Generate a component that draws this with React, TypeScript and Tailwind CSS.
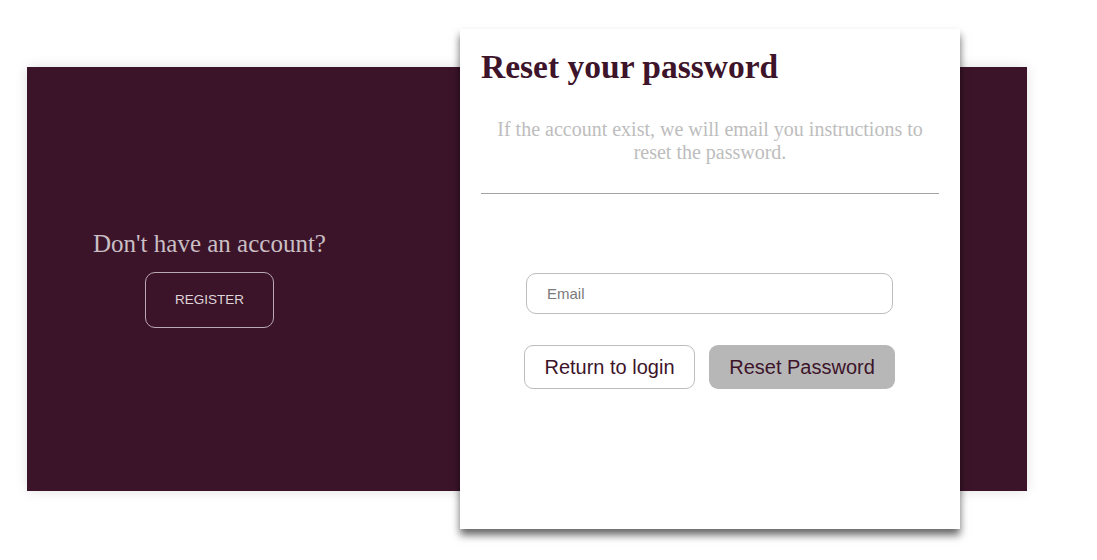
import React from "react";

const serif = "font-['Liberation_Serif','Times_New_Roman',serif]";
const sans = "font-['Liberation_Sans',Arial,sans-serif]";

const RegisterPanel = () => (
  <div className="flex h-full w-[365px] flex-col items-center justify-center">
    <h2 className={`${serif} text-[25px] leading-[27px] text-[#c9bfc4]`}>Don't have an account?</h2>
    <button className={`${sans} mt-[15px] h-[56px] w-[129px] rounded-[10px] border border-[#b9a9b2] text-[13.5px] uppercase text-[#ddd3d8]`}>
      Register
    </button>
  </div>
);

const ResetCard = () => (
  <div className="absolute left-[460px] top-[29px] flex h-[500px] w-[500px] flex-col bg-white px-[21px] pt-[19px] shadow-[0_6px_8px_rgba(0,0,0,0.6)]">
    <h1 className={`${serif} text-[33.5px] font-bold leading-[38px] text-[#3d1429]`}>Reset your password</h1>
    <p className={`${serif} mt-[32px] px-3 text-center text-[20px] leading-[23px] text-[#bdbdbd]`}>
      If the account exist, we will email you instructions to reset the password.
    </p>
    <hr className="mt-[29px] border-t border-[#a3a3a3]" />
    <div className="mt-[79px] flex flex-col items-center pr-[1px]">
      <input
        placeholder="Email"
        className={`${sans} h-[41px] w-[367px] rounded-[10px] border border-[#bdbdbd] px-[20px] text-[15px] outline-none placeholder:text-[#7a7a7a]`}
      />
      <div className="mt-[31px] flex gap-[14px]">
        <button className={`${sans} h-[44px] w-[171px] rounded-[9px] border border-[#bdbdbd] bg-white text-[20px] text-[#3d1429]`}>
          Return to login
        </button>
        <button className={`${sans} h-[44px] w-[186px] rounded-[9px] bg-[#b7b7b7] text-[20px] text-[#3d1429]`}>
          Reset Password
        </button>
      </div>
    </div>
  </div>
);

export default function App() {
  return (
    <div className="relative h-[560px] w-[1097px] bg-white">
      <div className="ml-[27px] pt-[67px]">
        <div className="h-[424px] w-[1000px] bg-[#3c1429] shadow-[0_0_12px_rgba(0,0,0,0.12)]">
          <RegisterPanel />
        </div>
      </div>
      <ResetCard />
    </div>
  );
}
